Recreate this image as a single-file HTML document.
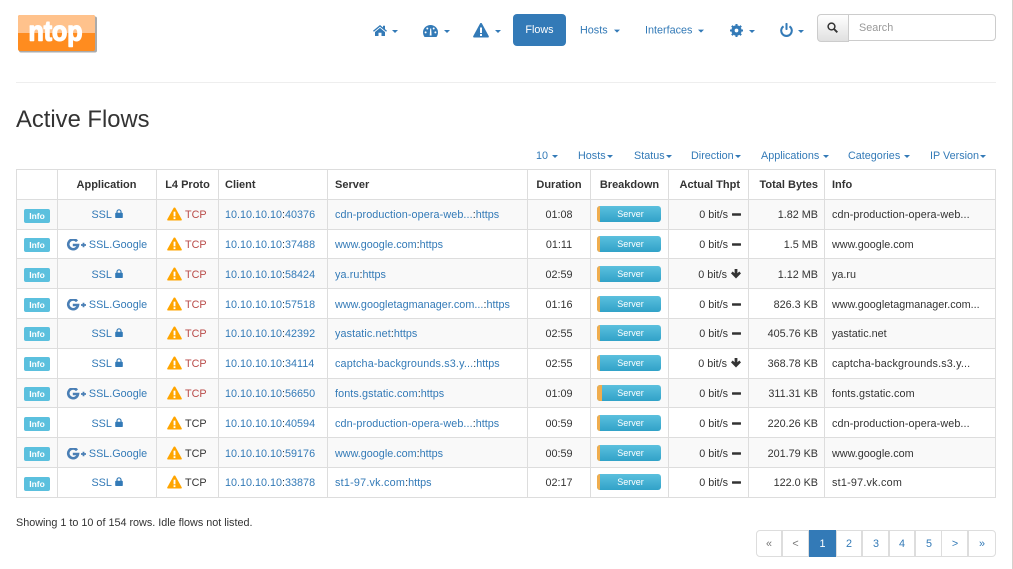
<!DOCTYPE html>
<html><head><meta charset="utf-8"><style>
*{box-sizing:border-box}
html,body{margin:0;padding:0;width:1013px;height:569px;overflow:hidden;background:#fff;font-family:"Liberation Sans",sans-serif;font-size:10.8px;color:#333}
a{color:#337ab7;text-decoration:none}
.abs{position:absolute}
.nav{position:absolute;top:31px;line-height:1;color:#337ab7;transform:translateY(-50%);white-space:nowrap}
.caret{display:inline-block;width:0;height:0;border-top:3px solid;border-left:3px solid transparent;border-right:3px solid transparent;vertical-align:middle;margin-left:1px}
.f{position:absolute;top:150px;line-height:13px;color:#337ab7;white-space:nowrap}
table.t{position:absolute;left:16px;top:169px;width:979px;border-collapse:collapse;table-layout:fixed}
.t th,.t td{border:1px solid #ddd;padding:0;vertical-align:middle;white-space:nowrap;position:relative}
.t tr.d td{padding-top:2px}
.t th{font-weight:bold;height:30px;text-align:center;font-size:11px}
.t tr.o td{background:#f9f9f9}
.t .l{text-align:left;padding-left:7px}
.t .cl{text-align:left;padding-left:6px}
.t .r{text-align:right;padding-right:6px}
.t .th2{text-align:right;padding-right:7px}
.c{text-align:center}
.lb{position:absolute;left:7px;top:9px;width:26px;height:14px;background:#5bc0de;border-radius:2px;color:#fff;font-weight:bold;font-size:8.5px;line-height:14px;text-align:center}
.t tr.d .lb{top:9px}
.t tr.u .lb{top:8px}
.t .tcp{padding-left:10px;color:#b94a48}
.t .tcp.k{color:#333}
.tcp svg{vertical-align:1px;margin:-4px 3px -4px 0}
.pb{position:relative;display:block;margin:-2px 0 0 6px;width:64px;height:16px;border-radius:3px;background:linear-gradient(#5bc0de,#31a2c8);overflow:hidden;color:#fff;font-size:9px;line-height:16px;text-align:center;padding-left:3px}
.pb i{position:absolute;left:0;top:0;width:3px;height:16px;background:#f0ad4e}
.pg{position:absolute;top:530px;height:27px;border:1px solid #ddd;margin-left:-1px;text-align:center;line-height:26px;color:#337ab7;font-size:10.8px;background:#fff}
.app svg{vertical-align:0}
.app svg.gi{vertical-align:0;margin:-3px 0 -3px -1px}
.s1{letter-spacing:.1px}.s2{letter-spacing:.15px}.s3{letter-spacing:.22px}
</style></head><body>
<svg width="0" height="0" style="position:absolute"><defs>
<symbol id="lock" viewBox="0 0 8 9"><path d="M2 4V2.800a2 2 0 0 1 4 0V4" fill="none" stroke="#337ab7" stroke-width="1.200"/><rect x=".2" y="3.800" width="7.600" height="5.200" rx=".8" fill="#337ab7"/></symbol>
<symbol id="warn" viewBox="0 0 16 15"><path d="M8 .5c.5 0 .8.2 1 .6l6.700 12c.4.800 0 1.400-.9 1.400H1.200c-.9 0-1.300-.6-.9-1.400L7 1.100c.2-.4.5-.6 1-.6z" fill="#ffa500"/><rect x="7" y="5" width="2" height="5" fill="#fff"/><rect x="7" y="11" width="2" height="2" fill="#fff"/></symbol>
<symbol id="g" viewBox="0 0 20 12"><path d="M11 2.300A4.900 4.900 0 1 0 12 6H6.800" fill="none" stroke="#4a7fb5" stroke-width="2.600"/><path d="M15 6h5M17.500 3.700v4.600" stroke="#4a7fb5" stroke-width="1.800" fill="none"/></symbol>
<symbol id="dash" viewBox="0 0 9 3"><rect width="9" height="2.400" y=".3" rx=".4" fill="#333"/></symbol>
<symbol id="down" viewBox="0 0 10 10"><path d="M3.600 0h2.800v4.200L8.300 2.500 10 4.400 5 9.500 0 4.400l1.700-1.900 1.900 1.700z" fill="#333"/></symbol>
</defs></svg>

<svg class="abs" style="left:16px;top:14px" width="82" height="39" viewBox="0 0 82 39">
<rect x="3" y="2.500" width="78" height="36" rx="2" fill="#aaa"/>
<rect x="2" y="1" width="77" height="36" rx="2" fill="#ff8c1f"/>
<path d="M2 19V3a2 2 0 0 1 2-2h73a2 2 0 0 1 2 2v16z" fill="#ffc28c"/>
<text x="39.500" y="26.300" text-anchor="middle" font-family="Liberation Sans" font-weight="bold" font-size="28" fill="#fff" stroke="#fff" stroke-width="1.400" stroke-linejoin="round" textLength="54" lengthAdjust="spacingAndGlyphs">ntop</text>
</svg>

<svg class="abs" style="left:373px;top:25px" width="14" height="11" viewBox="0 0 14 11"><path d="M7 0 0 5.800l.9 1L7 1.800l6.100 5 .9-1-2-1.700V.8h-2v1.700z" fill="#337ab7"/><path d="M2 7 7 2.900 12 7v4H8.500V7.800h-3V11H2z" fill="#337ab7"/></svg>
<span class="caret abs" style="left:391px;top:30px;color:#337ab7"></span>
<svg class="abs" style="left:423px;top:25px" width="15" height="12" viewBox="0 0 15 12"><path d="M7.500 0C3.400 0 0 3.200 0 7.300c0 1.700.5 3.300 1.500 4.700h12c1-1.400 1.500-3 1.500-4.700C15 3.200 11.600 0 7.500 0z" fill="#337ab7"/><g fill="#fff"><circle cx="2.600" cy="7.400" r="1"/><circle cx="4.300" cy="3.500" r="1"/><circle cx="10.700" cy="3.500" r="1"/><circle cx="12.400" cy="7.400" r="1"/><path d="M6.700 10.500 7.200 3.500h1l.4 7z"/></g></svg>
<span class="caret abs" style="left:443px;top:30px;color:#337ab7"></span>
<svg class="abs" style="left:473px;top:23px" width="16" height="15" viewBox="0 0 16 15"><path d="M8 0c.5 0 .8.2 1 .6l6.700 12.400c.4.800 0 1.500-.9 1.500H1.200c-.9 0-1.300-.7-.9-1.500L7 .6C7.200.2 7.500 0 8 0z" fill="#337ab7"/><rect x="7" y="4.500" width="2" height="5.500" fill="#fff"/><rect x="7" y="11" width="2" height="2" fill="#fff"/></svg>
<span class="caret abs" style="left:494px;top:30px;color:#337ab7"></span>
<div class="abs" style="left:513px;top:14px;width:53px;height:32px;background:#337ab7;border-radius:4px;color:#fff;text-align:center;line-height:33px">Flows</div>
<span class="nav" style="left:580px">Hosts <span class="caret" style="margin-left:3px"></span></span>
<span class="nav" style="left:645px">Interfaces <span class="caret" style="margin-left:3px"></span></span>
<svg class="abs" style="left:730px;top:24px" width="13" height="13" viewBox="0 0 14 14"><circle cx="7" cy="7" r="4.200" fill="none" stroke="#337ab7" stroke-width="2.800"/><path d="M7 0v14M0 7h14M2 2l10 10M12 2 2 12" stroke="#337ab7" stroke-width="2.200"/><circle cx="7" cy="7" r="2" fill="#fff"/></svg>
<span class="caret abs" style="left:748px;top:30px;color:#337ab7"></span>
<svg class="abs" style="left:780px;top:23px" width="13" height="14" viewBox="0 0 14 15"><path d="M3.800 3.500a5.700 5.700 0 1 0 6.400 0" fill="none" stroke="#337ab7" stroke-width="2.200"/><rect x="5.900" y="0" width="2.200" height="7.500" rx=".8" fill="#337ab7"/></svg>
<span class="caret abs" style="left:797px;top:30px;color:#337ab7"></span>

<div class="abs" style="left:817px;top:14px;width:32px;height:28px;border:1px solid #ccc;border-radius:4px 0 0 4px;background:linear-gradient(#fff,#e0e0e0)"></div>
<svg class="abs" style="left:827px;top:22px" width="11" height="11" viewBox="0 0 11 11"><circle cx="4.500" cy="4.500" r="3.400" fill="none" stroke="#333" stroke-width="1.500"/><path d="M7 7l3.300 3.300" stroke="#333" stroke-width="1.900"/></svg>
<div class="abs" style="left:848px;top:14px;width:148px;height:27px;border:1px solid #ccc;border-radius:0 4px 4px 0;background:#fff;color:#999;padding-left:10px;line-height:27px">Search</div>

<div class="abs" style="left:16px;top:82px;width:980px;height:1px;background:#eee"></div>
<div class="abs" style="left:16px;top:105px;font-size:23.8px;line-height:30px;color:#333">Active Flows</div>

<span class="f" style="left:536px">10 <span class="caret"></span></span>
<span class="f" style="left:578px">Hosts<span class="caret"></span></span>
<span class="f" style="left:634px">Status<span class="caret"></span></span>
<span class="f" style="left:691px">Direction<span class="caret"></span></span>
<span class="f" style="left:761px">Applications <span class="caret"></span></span>
<span class="f" style="left:848px">Categories <span class="caret"></span></span>
<span class="f" style="left:930px">IP Version<span class="caret"></span></span>

<table class="t">
<colgroup><col style="width:41px"><col style="width:99px"><col style="width:62px"><col style="width:109px"><col style="width:200px"><col style="width:63px"><col style="width:78px"><col style="width:80px"><col style="width:76px"><col style="width:171px"></colgroup>
<tr><th></th><th style="padding-right:1px">Application</th><th>L4 Proto</th><th class="cl">Client</th><th class="l">Server</th><th>Duration</th><th>Breakdown</th><th class="th2" style="padding-right:8px">Actual Thpt</th><th class="r">Total Bytes</th><th class="l">Info</th></tr>

<tr class="o" style="height:30px"><td><span class="lb">Info</span></td><td class="c app"><a>SSL</a> <svg width="8" height="9"><use href="#lock"/></svg></td><td class="tcp"><svg width="15" height="14"><use href="#warn"/></svg>TCP</td><td class="cl"><a>10.10.10.10</a>:<a>40376</a></td><td class="l"><a class="s1">cdn-production-opera-web...</a>:<a>https</a></td><td class="c">01:08</td><td><div class="pb"><i></i>Server</div></td><td class="th2">0 bit/s <svg width="9" height="3" style="vertical-align:2px;margin-left:1px"><use href="#dash"/></svg></td><td class="r">1.82 MB</td><td class="l s1">cdn-production-opera-web...</td></tr>

<tr class="d u" style="height:29px"><td><span class="lb">Info</span></td><td class="c app"><svg class="gi" width="20" height="12"><use href="#g"/></svg> <a>SSL.Google</a></td><td class="tcp"><svg width="15" height="14"><use href="#warn"/></svg>TCP</td><td class="cl"><a>10.10.10.10</a>:<a>37488</a></td><td class="l"><a>www.google.com</a>:<a>https</a></td><td class="c">01:11</td><td><div class="pb"><i></i>Server</div></td><td class="th2">0 bit/s <svg width="9" height="3" style="vertical-align:2px;margin-left:1px"><use href="#dash"/></svg></td><td class="r">1.5 MB</td><td class="l">www.google.com</td></tr>

<tr class="o d" style="height:30px"><td><span class="lb">Info</span></td><td class="c app"><a>SSL</a> <svg width="8" height="9"><use href="#lock"/></svg></td><td class="tcp"><svg width="15" height="14"><use href="#warn"/></svg>TCP</td><td class="cl"><a>10.10.10.10</a>:<a>58424</a></td><td class="l"><a class="s1">ya.ru</a>:<a>https</a></td><td class="c">02:59</td><td><div class="pb"><i></i>Server</div></td><td class="th2">0 bit/s <svg width="10" height="10" style="vertical-align:1px;margin:-2px 0 -2px 1px"><use href="#down"/></svg></td><td class="r">1.12 MB</td><td class="l">ya.ru</td></tr>

<tr class="d" style="height:30px"><td><span class="lb">Info</span></td><td class="c app"><svg class="gi" width="20" height="12"><use href="#g"/></svg> <a>SSL.Google</a></td><td class="tcp"><svg width="15" height="14"><use href="#warn"/></svg>TCP</td><td class="cl"><a>10.10.10.10</a>:<a>57518</a></td><td class="l"><a style="letter-spacing:.03px">www.googletagmanager.com...</a>:<a>https</a></td><td class="c">01:16</td><td><div class="pb"><i></i>Server</div></td><td class="th2">0 bit/s <svg width="9" height="3" style="vertical-align:2px;margin-left:1px"><use href="#dash"/></svg></td><td class="r">826.3 KB</td><td class="l">www.googletagmanager.com...</td></tr>

<tr class="o u" style="height:30px"><td><span class="lb">Info</span></td><td class="c app"><a>SSL</a> <svg width="8" height="9"><use href="#lock"/></svg></td><td class="tcp"><svg width="15" height="14"><use href="#warn"/></svg>TCP</td><td class="cl"><a>10.10.10.10</a>:<a>42392</a></td><td class="l"><a class="s1">yastatic.net</a>:<a>https</a></td><td class="c">02:55</td><td><div class="pb"><i></i>Server</div></td><td class="th2">0 bit/s <svg width="9" height="3" style="vertical-align:2px;margin-left:1px"><use href="#dash"/></svg></td><td class="r">405.76 KB</td><td class="l">yastatic.net</td></tr>

<tr class="u" style="height:30px"><td><span class="lb">Info</span></td><td class="c app"><a>SSL</a> <svg width="8" height="9"><use href="#lock"/></svg></td><td class="tcp"><svg width="15" height="14"><use href="#warn"/></svg>TCP</td><td class="cl"><a>10.10.10.10</a>:<a>34114</a></td><td class="l"><a class="s2">captcha-backgrounds.s3.y...</a>:<a>https</a></td><td class="c">02:55</td><td><div class="pb"><i></i>Server</div></td><td class="th2">0 bit/s <svg width="10" height="10" style="vertical-align:1px;margin:-2px 0 -2px 1px"><use href="#down"/></svg></td><td class="r">368.78 KB</td><td class="l s2">captcha-backgrounds.s3.y...</td></tr>

<tr class="o d u" style="height:29px"><td><span class="lb">Info</span></td><td class="c app"><svg class="gi" width="20" height="12"><use href="#g"/></svg> <a>SSL.Google</a></td><td class="tcp"><svg width="15" height="14"><use href="#warn"/></svg>TCP</td><td class="cl"><a>10.10.10.10</a>:<a>56650</a></td><td class="l"><a class="s1">fonts.gstatic.com</a>:<a>https</a></td><td class="c">01:09</td><td><div class="pb"><i style="width:5px"></i>Server</div></td><td class="th2">0 bit/s <svg width="9" height="3" style="vertical-align:2px;margin-left:1px"><use href="#dash"/></svg></td><td class="r">311.31 KB</td><td class="l s1">fonts.gstatic.com</td></tr>

<tr class="d" style="height:30px"><td><span class="lb">Info</span></td><td class="c app"><a>SSL</a> <svg width="8" height="9"><use href="#lock"/></svg></td><td class="tcp k"><svg width="15" height="14"><use href="#warn"/></svg>TCP</td><td class="cl"><a>10.10.10.10</a>:<a>40594</a></td><td class="l"><a class="s1">cdn-production-opera-web...</a>:<a>https</a></td><td class="c">00:59</td><td><div class="pb"><i></i>Server</div></td><td class="th2">0 bit/s <svg width="9" height="3" style="vertical-align:2px;margin-left:1px"><use href="#dash"/></svg></td><td class="r">220.26 KB</td><td class="l s1">cdn-production-opera-web...</td></tr>

<tr class="o d" style="height:30px"><td><span class="lb">Info</span></td><td class="c app"><svg class="gi" width="20" height="12"><use href="#g"/></svg> <a>SSL.Google</a></td><td class="tcp k"><svg width="15" height="14"><use href="#warn"/></svg>TCP</td><td class="cl"><a>10.10.10.10</a>:<a>59176</a></td><td class="l"><a>www.google.com</a>:<a>https</a></td><td class="c">00:59</td><td><div class="pb"><i></i>Server</div></td><td class="th2">0 bit/s <svg width="9" height="3" style="vertical-align:2px;margin-left:1px"><use href="#dash"/></svg></td><td class="r">201.79 KB</td><td class="l">www.google.com</td></tr>

<tr style="height:30px"><td><span class="lb">Info</span></td><td class="c app"><a>SSL</a> <svg width="8" height="9"><use href="#lock"/></svg></td><td class="tcp k"><svg width="15" height="14"><use href="#warn"/></svg>TCP</td><td class="cl"><a>10.10.10.10</a>:<a>33878</a></td><td class="l"><a class="s3">st1-97.vk.com</a>:<a>https</a></td><td class="c">02:17</td><td><div class="pb"><i></i>Server</div></td><td class="th2">0 bit/s <svg width="9" height="3" style="vertical-align:2px;margin-left:1px"><use href="#dash"/></svg></td><td class="r">122.0 KB</td><td class="l s3">st1-97.vk.com</td></tr>
</table>

<div class="abs" style="left:16px;top:516px;line-height:14px">Showing 1 to 10 of 154 rows. Idle flows not listed.</div>

<div class="pg" style="left:757px;width:26px;color:#777;border-radius:4px 0 0 4px">«</div>
<div class="pg" style="left:783px;width:27px;color:#777">&lt;</div>
<div class="pg" style="left:810px;width:27px;background:#337ab7;border-color:#337ab7;color:#fff">1</div>
<div class="pg" style="left:837px;width:26px">2</div>
<div class="pg" style="left:863px;width:27px;padding-left:1px">3</div>
<div class="pg" style="left:890px;width:26px">4</div>
<div class="pg" style="left:916px;width:27px;padding-left:1px">5</div>
<div class="pg" style="left:942px;width:27px;padding-left:1px">&gt;</div>
<div class="pg" style="left:969px;width:28px;border-radius:0 4px 4px 0">»</div>

<div class="abs" style="left:1012px;top:0;width:1px;height:569px;background:#d5d1cd"></div>
</body></html>
